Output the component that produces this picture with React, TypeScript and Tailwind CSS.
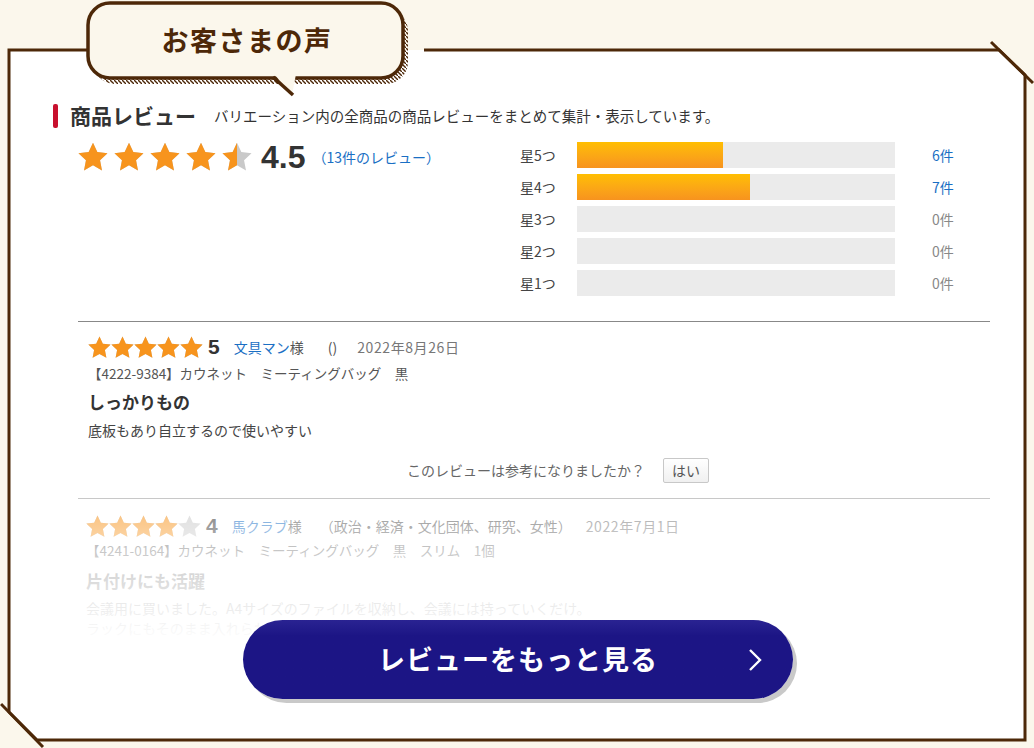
import { useId } from "react";

const BROWN = "#4d2808";
const CREAM = "#fbf7ec";

function Star({ size, fill = 1, on = "#f7941d", off = "#c9c9c9" }: { size: number; fill?: number; on?: string; off?: string }) {
  const id = useId();
  const d = "M12 2.2l2.9 6.2 6.8.8-5 4.7 1.3 6.8L12 17.3l-6 3.4 1.3-6.8-5-4.7 6.8-.8z";
  return (
    <svg width={size} height={size} viewBox="2 2 20 19.5">
      <defs>
        <clipPath id={id}>
          <rect x="0" y="0" width={2.3 + 19.4 * fill} height="24" />
        </clipPath>
      </defs>
      <path d={d} fill={off} />
      <path d={d} fill={on} clipPath={`url(#${id})`} />
    </svg>
  );
}

function Frame() {
  return (
    <svg className="absolute inset-0 pointer-events-none" width="1034" height="748">
      <polygon points="9,50 999,50 1025,75 1025,740 37,740 9,712" fill="#ffffff" />
      <path
        d="M424 50 L999 50 L1025 75 L1025 740 L37 740 L9 712 L9 50 L88 50"
        fill="none"
        stroke={BROWN}
        strokeWidth="3"
      />
      <line x1="991" y1="42" x2="1033" y2="83" stroke={BROWN} strokeWidth="3" />
      <line x1="1" y1="704" x2="43" y2="747" stroke={BROWN} strokeWidth="3" />
    </svg>
  );
}

function Bubble() {
  return (
    <div className="relative ml-[82px] w-[340px] h-[96px]">
      <svg className="absolute inset-0" width="340" height="100">
        <defs>
          <pattern id="hatch" width="4" height="4" patternUnits="userSpaceOnUse">
            <line x1="0" y1="0" x2="4" y2="4" stroke={BROWN} strokeWidth="1.4" />
          </pattern>
        </defs>
        <rect x="11" y="9" width="315" height="75" rx="22" fill="url(#hatch)" />
        <rect x="6" y="3" width="315" height="75" rx="22" fill={CREAM} stroke={BROWN} strokeWidth="3.5" />
        <polygon points="192,74 210,95 214,74" fill={CREAM} />
        <line x1="191" y1="77" x2="211" y2="95" stroke={BROWN} strokeWidth="3.5" />
      </svg>
      <div className="relative flex h-[80px] items-center justify-center pr-[10px] text-[27px] font-bold tracking-[1.5px] text-[#4d2808]">
        お客さまの声
      </div>
    </div>
  );
}

const dist = [
  { label: "星5つ", count: 6, pct: 46 },
  { label: "星4つ", count: 7, pct: 54.5 },
  { label: "星3つ", count: 0, pct: 0 },
  { label: "星2つ", count: 0, pct: 0 },
  { label: "星1つ", count: 0, pct: 0 },
];

export default function App() {
  return (
    <div
      className="relative w-[1034px] h-[748px] overflow-hidden bg-[#fbf7ec]"
      style={{ fontFamily: '"Noto Sans CJK JP", "Noto Sans", sans-serif' }}
    >
      <Frame />
      <div className="relative flex flex-col">
        <Bubble />

        <div className="mt-[8px] ml-[53px] flex h-[24px] items-center">
          <div className="h-[24px] w-[5px] rounded-[2px] bg-[#c8102e]" />
          <span className="ml-[12px] text-[21px] font-bold text-[#333]">商品レビュー</span>
          <span className="ml-[18px] text-[14.5px] text-[#333]">
            バリエーション内の全商品の商品レビューをまとめて集計・表示しています。
          </span>
        </div>

        <div className="mt-[14px] flex">
          <div className="ml-[78px] flex h-[30px] w-[442px] items-center">
            <div className="flex gap-[6px]">
              {[1, 1, 1, 1, 0.5].map((f, i) => (
                <Star key={i} size={30} fill={f} />
              ))}
            </div>
            <span
              className="ml-[9px] text-[32px] font-bold text-[#333]"
              style={{ fontFamily: '"Liberation Sans", sans-serif' }}
            >
              4.5
            </span>
            <span className="ml-[7px] text-[14px] text-[#1a6fc4]">（13件のレビュー）</span>
          </div>
          <div className="flex flex-col gap-[6px]">
            {dist.map((r) => (
              <div key={r.label} className="flex h-[26px] items-center">
                <span className="w-[57px] text-[14px] text-[#444]">{r.label}</span>
                <div className="h-[26px] w-[318px] bg-[#ebebeb]">
                  <div
                    className="h-full bg-linear-to-b from-[#ffbe00] to-[#f7931e]"
                    style={{ width: `${r.pct}%` }}
                  />
                </div>
                <span className={`ml-[37px] text-[14px] ${r.count ? "text-[#1a6fc4]" : "text-[#888]"}`}>
                  {r.count}件
                </span>
              </div>
            ))}
          </div>
        </div>

        <div className="mt-[25px] ml-[78px] h-px w-[912px] bg-[#888]" />

        <div className="flex flex-col pl-[88px]">
          <div className="mt-[14px] flex h-[22px] items-center text-[14px]">
            <div className="flex">
              {[0, 1, 2, 3, 4].map((i) => (
                <Star key={i} size={23} />
              ))}
            </div>
            <span
              className="ml-[5px] text-[21px] font-bold text-[#333]"
              style={{ fontFamily: '"Liberation Sans", sans-serif' }}
            >
              5
            </span>
            <span className="ml-[14px] text-[#1a6fc4]">文具マン</span>
            <span className="text-[#555]">様</span>
            <span className="ml-[24px] text-[#555]">()</span>
            <span className="ml-[20px] tracking-[0.6px] text-[#777]">2022年8月26日</span>
          </div>
          <div className="mt-[5px] text-[13.5px] leading-[20px] text-[#555]">
            【4222-9384】カウネット　ミーティングバッグ　黒
          </div>
          <div className="mt-[7px] text-[17px] font-bold leading-[24px] text-[#333]">しっかりもの</div>
          <div className="mt-[6px] text-[14px] leading-[20px] text-[#444]">底板もあり自立するので使いやすい</div>
          <div className="mt-[18px] ml-[319px] flex items-center">
            <span className="text-[14px] text-[#666]">このレビューは参考になりましたか？</span>
            <button className="ml-[18px] flex h-[25px] w-[46px] items-center justify-center rounded-[2px] border border-[#c8c8c8] bg-linear-to-b from-white to-[#f0f0f0] text-[14px] text-[#555]">
              はい
            </button>
          </div>
        </div>

        <div className="mt-[15px] ml-[78px] h-px w-[912px] bg-[#c8c8c8]" />

        <div className="relative h-[240px] pt-[16px]">
          <div className="flex flex-col pl-[86px]">
            <div className="flex h-[22px] items-center text-[14px]">
              <div className="flex">
                {[1, 1, 1, 1, 0].map((f, i) => (
                  <Star key={i} size={23} fill={f} />
                ))}
              </div>
              <span
                className="ml-[5px] text-[21px] font-bold text-[#333]"
                style={{ fontFamily: '"Liberation Sans", sans-serif' }}
              >
                4
              </span>
              <span className="ml-[14px] text-[#1a6fc4]">馬クラブ</span>
              <span className="text-[#555]">様</span>
              <span className="ml-[18px] text-[#555]">（政治・経済・文化団体、研究、女性）</span>
              <span className="ml-[14px] tracking-[0.6px] text-[#777]">2022年7月1日</span>
            </div>
            <div className="mt-[3px] text-[13.5px] leading-[20px] text-[#555]">
              【4241-0164】カウネット　ミーティングバッグ　黒　スリム　1個
            </div>
            <div className="mt-[9px] text-[17px] font-bold leading-[24px] text-[#333]">片付けにも活躍</div>
            <div className="mt-[5px] text-[14px] leading-[20px] text-[#444]">
              会議用に買いました。A4サイズのファイルを収納し、会議には持っていくだけ。
              <br />
              ラックにもそのまま入れられて楽ちんです。
            </div>
          </div>
          <div className="absolute left-[78px] right-[44px] top-0 h-[145px] bg-linear-to-b from-white/35 via-white/80 to-white" />
          <button className="absolute left-[243px] top-[121px] flex h-[79px] w-[550px] items-center justify-center rounded-full bg-linear-to-b from-[#2a2392] to-[#1c1585] to-[20%] text-[27px] font-bold text-white shadow-[4px_4px_0_#c9c9c9]">
            <span className="tracking-[1px]">レビューをもっと見る</span>
            <svg className="absolute right-[30px]" width="16" height="24" viewBox="0 0 16 24">
              <path d="M3 2 L13 12 L3 22" fill="none" stroke="#fff" strokeWidth="2.4" />
            </svg>
          </button>
        </div>
      </div>
    </div>
  );
}
